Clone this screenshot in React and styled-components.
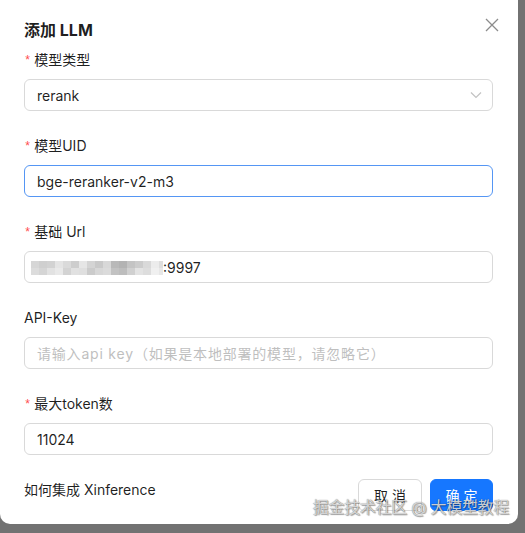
import styled, { createGlobalStyle } from "styled-components";

const GlobalStyle = createGlobalStyle`
  html, body {
    margin: 0;
    padding: 0;
    background: #727272;
    height: 100%;
    overflow: hidden;
  }
  body {
    font-family: Inter, "Noto Sans CJK SC", sans-serif;
    color: rgba(0, 0, 0, 0.88);
  }
`;

const fields = [
  { label: "模型类型", required: true, kind: "select", value: "rerank" },
  { label: "模型UID", required: true, value: "bge-reranker-v2-m3", focused: true },
  { label: "基础 Url", required: true, kind: "url", value: ":9997" },
  {
    label: "API-Key",
    placeholder: "请输入api key（如果是本地部署的模型，请忽略它）",
  },
  { label: "最大token数", required: true, value: "11024" },
];

// shades of the redaction mosaic over the url, top row then bottom row
const mosaicTop = [
  "#d6d6d6", "#cfcfcf", "#d2d2d2", "#e4e4e4", "#dadada", "#cdcdcd", "#e6e6e6", "#d4d4d4",
  "#c9c9c9", "#d8d8d8", "#b9b9b9", "#b3b3b3", "#c4c4c4", "#cccccc", "#d9d9d9", "#ececec",
  "#dedede",
];
const mosaicBottom = [
  "#dcdcdc", "#d5d5d5", "#e2e2e2", "#e9e9e9", "#d3d3d3", "#e1e1e1", "#dfdfdf", "#cbcbcb",
  "#d7d7d7", "#dbdbdb", "#c2c2c2", "#bdbdbd", "#d0d0d0", "#e3e3e3", "#dddddd", "#f0f0f0",
  "#e7e7e7",
];

const Mosaic = () => (
  <MosaicSvg width="132" height="14" viewBox="0 0 132 14">
    {mosaicTop.map((c, i) => (
      <rect key={"t" + i} x={i * 8} y="0" width="8" height="7" fill={c} />
    ))}
    {mosaicBottom.map((c, i) => (
      <rect key={"b" + i} x={i * 8} y="7" width="8" height="7" fill={c} />
    ))}
  </MosaicSvg>
);

const Modal = () => {
  return (
    <Page>
      <GlobalStyle />
      <Dialog>
        <Header>
          <Title>添加 LLM</Title>
          <CloseButton aria-label="close">
            <svg width="14" height="14" viewBox="0 0 14 14">
              <path d="M1 1 L13 13 M13 1 L1 13" stroke="#8c8c8c" strokeWidth="1.3" fill="none" />
            </svg>
          </CloseButton>
        </Header>
        {fields.map((f) => (
          <FormItem key={f.label}>
            <Label>
              {f.required && <Star>*</Star>}
              {f.label}
            </Label>
            <Field focused={f.focused}>
              {f.kind === "url" && <Mosaic />}
              {f.value ? <Value>{f.value}</Value> : <Placeholder>{f.placeholder}</Placeholder>}
              {f.kind === "select" && (
                <Chevron width="12" height="8" viewBox="0 0 12 8">
                  <path d="M1 1.5 L6 6.5 L11 1.5" stroke="#c2c2c2" strokeWidth="1.2" fill="none" />
                </Chevron>
              )}
            </Field>
          </FormItem>
        ))}
        <Footer>
          <HelpLink>如何集成 Xinference</HelpLink>
          <Buttons>
            <Button>取 消</Button>
            <Button primary>确 定</Button>
          </Buttons>
        </Footer>
        <Watermark>掘金技术社区 @ 大模型教程</Watermark>
      </Dialog>
    </Page>
  );
};

export default function App() {
  return <Modal />;
}

const Page = styled.div`
  width: 525px;
  height: 533px;
`;

const Dialog = styled.div`
  position: relative;
  box-sizing: border-box;
  width: 518px;
  height: 534px;
  margin-top: -10px;
  padding: 28px 25px 0 24px;
  background: #ffffff;
  border-radius: 10px;
`;

const Header = styled.div`
  display: flex;
  align-items: center;
  justify-content: space-between;
  height: 24px;
  margin-bottom: 7px;
`;

const Title = styled.div`
  font-size: 16px;
  font-weight: 700;
  line-height: 24px;
  color: rgba(0, 0, 0, 0.88);
`;

const CloseButton = styled.div`
  display: flex;
  width: 16px;
  height: 16px;
  align-items: center;
  justify-content: center;
  margin-right: -7px;
  margin-top: -10px;
`;

const FormItem = styled.div`
  display: flex;
  flex-direction: column;
  gap: 8px;
  margin-bottom: 24px;
`;

const Label = styled.div`
  display: flex;
  align-items: center;
  height: 22px;
  font-size: 14px;
  line-height: 22px;
`;

const Star = styled.span`
  color: #ff4d4f;
  font-family: "Liberation Mono", monospace;
  font-size: 12px;
  margin: 2px 3px 0 0;
`;

const Field = styled.div`
  box-sizing: border-box;
  display: flex;
  align-items: center;
  height: 32px;
  padding: 0 12px;
  border: 1px solid ${(p) => (p.focused ? "#5596f4" : "#d9d9d9")};
  border-radius: 6px;
  font-size: 14px;
  background: #fff;
  overflow: hidden;
`;

const MosaicSvg = styled.svg`
  flex: none;
  margin: 2px 0 0 -6px;
  filter: blur(0.6px);
`;

const Value = styled.span`
  flex: 1;
  white-space: nowrap;
  color: rgba(0, 0, 0, 0.88);
`;

const Placeholder = styled.span`
  flex: 1;
  white-space: nowrap;
  color: #bfbfbf;
  letter-spacing: 0.8px;
`;

const Chevron = styled.svg`
  margin-right: -2px;
`;

const Footer = styled.div`
  display: flex;
  justify-content: space-between;
  align-items: flex-start;
`;

const HelpLink = styled.div`
  font-size: 14px;
  line-height: 22px;
  color: rgba(0, 0, 0, 0.88);
`;

const Buttons = styled.div`
  display: flex;
  gap: 8px;
`;

const Button = styled.div`
  box-sizing: border-box;
  display: flex;
  align-items: center;
  justify-content: center;
  width: ${(p) => (p.primary ? "63px" : "64px")};
  height: 32px;
  border-radius: 6px;
  font-size: 14px;
  border: 1px solid ${(p) => (p.primary ? "#1677ff" : "#d9d9d9")};
  background: ${(p) => (p.primary ? "#1677ff" : "#fff")};
  color: ${(p) => (p.primary ? "#fff" : "rgba(0, 0, 0, 0.88)")};
`;

const Watermark = styled.div`
  position: absolute;
  right: 9px;
  bottom: 6px;
  font-size: 16px;
  letter-spacing: -0.3px;
  color: rgba(225, 225, 225, 0.9);
  text-shadow: 0 0 1px rgba(0, 0, 0, 0.55), 1px 1px 1px rgba(0, 0, 0, 0.35);
  white-space: nowrap;
`;
